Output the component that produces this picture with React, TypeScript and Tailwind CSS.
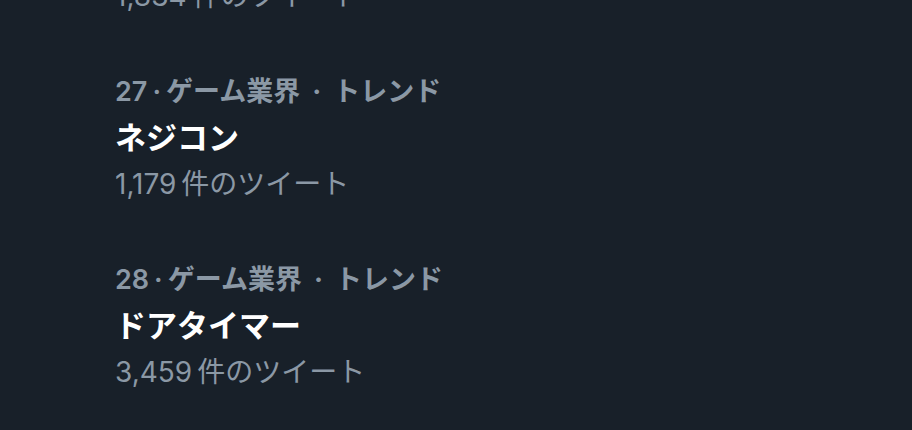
const trends = [
  { rank: 27, category: 'ゲーム業界', name: 'ネジコン', count: '1,179' },
  { rank: 28, category: 'ゲーム業界', name: 'ドアタイマー', count: '3,459' },
];

const font = { fontFamily: '"Inter", "Noto Sans CJK JP", sans-serif' };

export default function App() {
  return (
    <div className="w-[912px] h-[430px] overflow-hidden bg-[#182029]" style={font}>
      {/* tail of the previous trend, scrolled off the top */}
      <div className="h-[44px] pb-[25px] pl-[115px] flex flex-col justify-end overflow-hidden">
        <div className="h-[46px] shrink-0 leading-[46px] text-[28px] text-[#8b98a5] whitespace-nowrap">
          1,834<span className="ml-[6px]">件のツイート</span>
        </div>
      </div>

      {trends.map((t) => (
        <div key={t.rank} className="pl-[115px] py-[25px] flex flex-col">
          <div className="h-[46px] leading-[46px] text-[27px] font-semibold text-[#8b98a5] whitespace-nowrap">
            {t.rank}
            <span className="mx-[5px]">·</span>
            {t.category}
            <span className="mx-[12px] font-bold">·</span>
            トレンド
          </div>
          <div className="h-[46px] leading-[46px] text-[31px] font-bold text-white whitespace-nowrap">{t.name}</div>
          <div className="h-[46px] leading-[46px] text-[28px] text-[#8b98a5] whitespace-nowrap">
            {t.count}
            <span className="ml-[5px]">件のツイート</span>
          </div>
        </div>
      ))}
    </div>
  );
}
